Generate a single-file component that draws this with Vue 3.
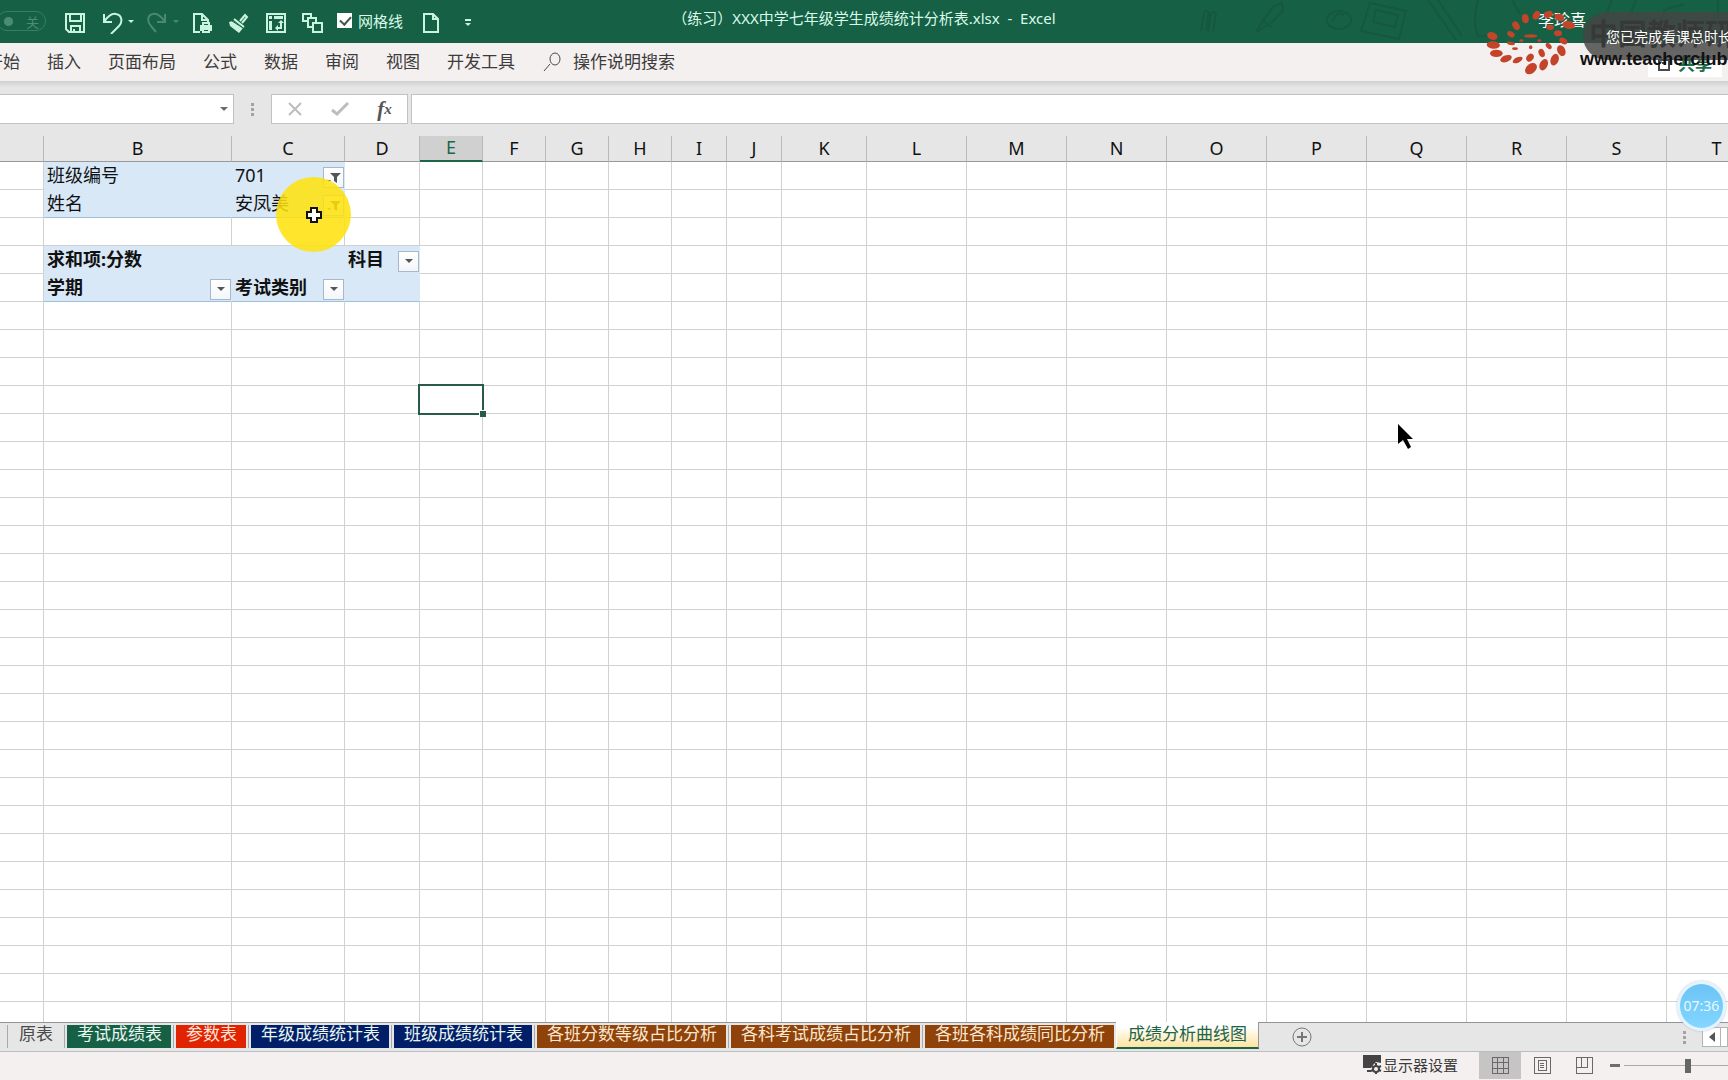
<script setup>
const menus = ['开始', '插入', '页面布局', '公式', '数据', '审阅', '视图', '开发工具']

const columns = [
  { name: '', width: 44 },
  { name: 'B', width: 188 },
  { name: 'C', width: 113 },
  { name: 'D', width: 75 },
  { name: 'E', width: 63 },
  { name: 'F', width: 63 },
  { name: 'G', width: 63 },
  { name: 'H', width: 63 },
  { name: 'I', width: 55 },
  { name: 'J', width: 55 },
  { name: 'K', width: 85 },
  ...'LMNOPQRST'.split('').map((name) => ({ name, width: 100 })),
]

const rowCount = 31
const active = 'E9'

const cells = {
  B1: { text: '班级编号', kind: 'pivot' },
  C1: { text: '701', kind: 'pivot', button: 'filter' },
  B2: { text: '姓名', kind: 'pivot last' },
  C2: { text: '安凤美', kind: 'pivot last', button: 'filter' },
  B4: { text: '求和项:分数', kind: 'pivot bold' },
  C4: { text: '', kind: 'pivot' },
  D4: { text: '科目', kind: 'pivot bold', button: 'drop' },
  B5: { text: '学期', kind: 'pivot bold last', button: 'drop' },
  C5: { text: '考试类别', kind: 'pivot bold last', button: 'drop' },
  D5: { text: '', kind: 'pivot last' },
}
const cellAt = (col, row) => cells[col + row] || {}

const sheets = [
  { name: '原表', tone: 'plain' },
  { name: '考试成绩表', tone: 'green' },
  { name: '参数表', tone: 'red' },
  { name: '年级成绩统计表', tone: 'navy' },
  { name: '班级成绩统计表', tone: 'navy' },
  { name: '各班分数等级占比分析', tone: 'brown' },
  { name: '各科考试成绩占比分析', tone: 'brown' },
  { name: '各班各科成绩同比分析', tone: 'brown' },
  { name: '成绩分析曲线图', tone: 'current' },
]

// cx, cy, rx, ry, rotation of every petal in the emblem
const petals = [
  [97, 108, 16, 11, 20], [100, 135, 20, 11, 5], [109, 160, 19, 11, 0],
  [138, 176, 18, 10, -20], [173, 180, 16, 8, -25], [213, 206, 20, 14, -40],
  [251, 194, 18, 12, -65], [284, 179, 18, 12, -70], [304, 152, 17, 12, 65],
  [310, 123, 13, 9, 30], [153, 103, 12, 8, 30], [168, 77, 14, 10, 60],
  [196, 56, 14, 10, 80], [229, 46, 14, 10, -60], [265, 43, 14, 10, -20],
  [298, 52, 15, 11, 20], [326, 75, 19, 12, 10], [153, 130, 12, 5, 10],
  [165, 146, 9, 4, 0], [210, 173, 13, 10, -50], [245, 159, 13, 9, 70],
  [266, 138, 11, 7, 50], [294, 100, 12, 9, 0], [270, 82, 12, 8, 0],
  [212, 142, 5, 6, 0], [212, 108, 20, 5, 0], [184, 122, 6, 4, 0], [238, 122, 6, 4, 0],
]
</script>

<template>
  <div class="app">
    <header class="titlebar">
      <svg class="doodles" viewBox="0 0 548 43" width="548" height="43" aria-hidden="true">
        <path d="M21 31l3-18q3-4 5 0l-3 17M28 32l3-18q3-4 5 0l-3 17M76 32l6-10 12-16 8-3 1 8-12 12zM84 21l7 6M148 24a11 8 0 1 1 22-8a11 8 0 1 1-22 8M152 22q5-12 12-7M190 3l36 8-7 28-38-8zM196 10l22 5-3 12-22-5zM248 0l28 40M258 0l24 36M298 0q-6 22 0 36h10M332 0l8 14M432 0l-12 30M456 0l-14 36M480 40l4-30 20-6M538 0v30" />
      </svg>
      <div class="quick">
        <button class="toggle" aria-label="自动保存"><i></i><span>关</span></button>
        <button class="ico save" aria-label="保存">
          <svg width="20" height="20" viewBox="0 0 20 20"><path d="M1 1h18v18H4l-3-3zM5 1v7h11V1M6 19v-6h9v6M9 19v-3" /></svg>
        </button>
        <button class="ico undo" aria-label="撤消">
          <svg width="34" height="22" viewBox="0 0 34 22"><path d="M2 2v8h8M2 10C6 4 10 1 14 2c6 1 7 8 3 12l-8 8" /><path class="solid" d="M26 8h6l-3 3z" /></svg>
        </button>
        <button class="ico redo" aria-label="恢复">
          <svg width="34" height="22" viewBox="0 0 34 22"><path d="M18 2v8h-8M18 10C14 4 10 1 6 2c-6 1-6 8-2 12l5 6" /><path class="solid" d="M26 8h6l-3 3z" /></svg>
        </button>
        <button class="ico print" aria-label="打印预览">
          <svg width="20" height="20" viewBox="0 0 20 20"><path d="M7 19H1V1h8l6 6v2M9 1v6h6M10 13v-3h6v3" /><path class="solid" d="M7 12h12v6h-2v-3H9v3H7z" /><path d="M10 16h6v3h-6z" /></svg>
        </button>
        <button class="ico brush" aria-label="格式刷">
          <svg width="21" height="21" viewBox="0 0 21 21"><path d="M12 8l5-6 2 2-5 6M6 6l10 8" /><path class="solid" d="M1 9l4-1 10 7-4 5zM1 9l1 4 9 7z" /><path class="cut" d="M4 8l11 7" /></svg>
        </button>
        <button class="ico pivot" aria-label="数据透视表">
          <svg width="20" height="20" viewBox="0 0 20 20"><path d="M1 1h18v18H1z" /><path class="solid" d="M3 3h3v3H3zM8 3h9v3H8zM3 8h3v9H3zM12 10l3-3 3 3zM12 12l-3 3 3 3z" /><path d="M15 9v6h-4" /></svg>
        </button>
        <button class="ico copies" aria-label="选择窗格">
          <svg width="21" height="20" viewBox="0 0 21 20"><path d="M5 8H1V1h8v3M10 14H6V5h8v4M11 10h9v9h-9z" /></svg>
        </button>
        <label class="gridtick"><input type="checkbox" checked /><span>网格线</span></label>
        <button class="ico page" aria-label="新建">
          <svg width="17" height="20" viewBox="0 0 17 20"><path d="M1 1h9l5 5v13H1zM10 1v5h5" /></svg>
        </button>
        <button class="ico more" aria-label="自定义快速访问工具栏">
          <svg width="8" height="8" viewBox="0 0 8 8"><path d="M1 1h6" /><path class="solid" d="M1 4h6l-3 3z" /></svg>
        </button>
      </div>
      <h1>（练习）XXX中学七年级学生成绩统计分析表.xlsx&nbsp; -&nbsp; Excel</h1>
      <div class="account"><span>李珍喜</span></div>
    </header>

    <div class="ribbon">
      <nav>
        <a v-for="m in menus" :key="m" href="#">{{ m }}</a>
      </nav>
      <button class="tellme">
        <svg width="20" height="20" viewBox="0 0 20 20"><path d="M7 12L1 19M12 1a5 6 0 1 1 0 12a5 6 0 1 1 0-12" /></svg>
        <span>操作说明搜索</span>
      </button>
      <button class="share">
        <svg width="12" height="14" viewBox="0 0 12 14"><path d="M1 3h10v10H1zM4 6h4" /></svg>
        <span>共享</span>
      </button>
    </div>

    <div class="formula">
      <div class="namebox">
        <input type="text" aria-label="名称框" />
        <button aria-label="展开名称框"><svg width="8" height="5" viewBox="0 0 8 5"><path d="M0 0h8L4 4z" /></svg></button>
      </div>
      <span class="grip"><i></i><i></i><i></i></span>
      <div class="fxbox">
        <button aria-label="取消"><svg width="16" height="14" viewBox="0 0 16 14"><path d="M2 1l12 12M14 1L2 13" /></svg></button>
        <button aria-label="输入"><svg width="18" height="14" viewBox="0 0 18 14"><path class="thick" d="M1 8l5 4L17 1" /></svg></button>
        <button class="fx" aria-label="插入函数"><span>f</span><small>x</small></button>
      </div>
      <input class="expr" type="text" aria-label="编辑栏" />
    </div>

    <main class="sheet">
      <table>
        <colgroup>
          <col v-for="c in columns" :key="c.name" :style="{ width: c.width + 'px' }" />
        </colgroup>
        <thead>
          <tr>
            <th v-for="c in columns" :key="c.name" :class="{ on: c.name === 'E' }">{{ c.name }}</th>
          </tr>
        </thead>
        <tbody>
          <tr v-for="r in rowCount" :key="r">
            <td v-for="c in columns" :key="c.name" :class="cellAt(c.name, r).kind">
              <div v-if="cellAt(c.name, r).kind" class="cell">
                <span>{{ cellAt(c.name, r).text }}</span>
                <button v-if="cellAt(c.name, r).button" :aria-label="'筛选 ' + cellAt(c.name, r).text">
                  <svg v-if="cellAt(c.name, r).button === 'filter'" width="14" height="12" viewBox="0 0 14 12"><path d="M3 1h11l-4 4v6l-3-2V5zM0 8h4l-2 2z" /></svg>
                  <svg v-else width="8" height="5" viewBox="0 0 8 5"><path d="M0 0h8L4 4z" /></svg>
                </button>
              </div>
              <div v-if="c.name + r === active" class="selection"><i></i></div>
            </td>
          </tr>
        </tbody>
      </table>
    </main>

    <div class="tabs">
      <ul>
        <li v-for="s in sheets" :key="s.name" :class="s.tone"><button>{{ s.name }}</button></li>
      </ul>
      <button class="add" aria-label="新工作表">
        <svg width="22" height="22" viewBox="0 0 22 22"><circle cx="11" cy="11" r="9" /><path d="M11 6v10M6 11h10" /></svg>
      </button>
      <div class="hscroll">
        <span class="grip"><i></i><i></i><i></i></span>
        <button aria-label="向左滚动"><svg width="6" height="10" viewBox="0 0 6 10"><path d="M6 0v10L0 5z" /></svg></button>
        <span class="bar"></span>
      </div>
    </div>

    <footer class="status">
      <button class="display">
        <svg width="20" height="19" viewBox="0 0 20 19">
          <path class="solid" d="M1 0h18v8l-5-1-5 5v1H1zM5 15h4v2H5z" />
          <path class="gear" d="M14 8v11M9 11l10 5M19 11L9 16" /><circle cx="14" cy="14" r="3" />
        </svg>
        <span>显示器设置</span>
      </button>
      <button class="view on" aria-label="普通"><svg width="18" height="18" viewBox="0 0 18 18"><path d="M1 1h16v16H1zM1 6h16M1 12h16M6 1v16M12 1v16" /></svg></button>
      <button class="view" aria-label="页面布局"><svg width="18" height="18" viewBox="0 0 18 18"><path d="M1 1h16v16H1zM5 4h8v10H5zM7 7h4M7 9h4M7 11h4" /></svg></button>
      <button class="view" aria-label="分页预览"><svg width="18" height="18" viewBox="0 0 18 18"><path d="M1 1h16v16H1zM1 11h11V1M6 1v10" /></svg></button>
      <button class="minus" aria-label="缩小"></button>
      <input class="zoom" type="range" aria-label="缩放" value="50" />
    </footer>

    <div class="spot">
      <svg width="16" height="16" viewBox="0 0 16 16"><path d="M5 1h6v4h4v6h-4v4H5v-4H1V5h4z" /></svg>
    </div>
    <svg class="pointer" width="16" height="26" viewBox="0 0 16 26"><path d="M0 0l15 15H9l4 8-3 2-5-9-5 4z" /></svg>

    <div class="clock">07:36</div>

    <div class="watermark">
      <svg class="emblem" viewBox="0 0 804 270" width="268" height="90" aria-hidden="true">
        <ellipse v-for="(p, i) in petals" :key="i" :cx="p[0]" :cy="p[1]" :rx="p[2]" :ry="p[3]" :transform="`rotate(${p[4]} ${p[0]} ${p[1]})`" />
      </svg>
      <span class="brand">中国教师研</span>
      <div class="notice">您已完成看课总时长</div>
      <span class="site">www.teacherclub</span>
    </div>
  </div>
</template>

<style>
html,
body,
#app {
  height: 100%;
}
body {
  margin: 0;
}
</style>

<style scoped>
.app {
  position: relative;
  display: flex;
  flex-direction: column;
  height: 100%;
  overflow: hidden;
  background: #e6e6e7;
  color: #111;
  font-family: 'Noto Sans', 'Noto Sans CJK SC', sans-serif;
}
* {
  box-sizing: border-box;
}
button {
  display: flex;
  align-items: center;
  justify-content: center;
  padding: 0;
  border: 0;
  background: none;
  color: inherit;
  font: inherit;
}
svg {
  display: block;
  flex: none;
}

/* title bar */
.titlebar {
  position: relative;
  display: grid;
  grid-template-columns: 1fr auto 1fr;
  flex: none;
  height: 43px;
  background: #166045;
  color: #d9fbea;
  font-size: 15px;
}
.doodles {
  position: absolute;
  top: 0;
  right: 0;
  fill: none;
  stroke: #15583f;
  stroke-width: 2;
}
.quick {
  display: flex;
  align-items: center;
  padding-top: 3px;
}
.ico svg {
  fill: none;
  stroke: #c9f5df;
  stroke-width: 2;
}
.ico .solid {
  fill: #c9f5df;
  stroke: none;
}
.ico .cut {
  stroke: #166045;
  stroke-width: 1;
}
.toggle {
  gap: 13px;
  width: 49px;
  height: 20px;
  margin-left: -3px;
  margin-bottom: 4px;
  border: 1px solid #35805f;
  border-radius: 10px;
  color: #4b8d70;
  font-size: 13px;
}
.toggle i {
  width: 9px;
  height: 9px;
  border-radius: 5px;
  background: #4b8d70;
}
.save {
  margin-left: 19px;
}
.undo {
  margin-left: 17px;
}
.redo {
  margin-left: 11px;
  opacity: 0.28;
}
.print {
  margin-left: 12px;
}
.brush {
  margin-left: 15px;
}
.pivot {
  margin-left: 17px;
}
.copies {
  margin-left: 16px;
}
.gridtick {
  display: flex;
  align-items: center;
  gap: 6px;
  margin-left: 14px;
  margin-bottom: 5px;
  line-height: 20px;
}
.gridtick input {
  appearance: none;
  width: 15px;
  height: 15px;
  margin: 0;
  background: #fff;
}
.gridtick input:checked::before {
  content: '';
  display: block;
  width: 9px;
  height: 5px;
  margin: 3px 0 0 3px;
  border: solid #45554d;
  border-width: 0 0 2px 2px;
  transform: rotate(-48deg);
}
.page {
  margin-left: 20px;
}
.more {
  margin-left: 24px;
}
h1 {
  margin: 0;
  font-size: 15px;
  font-weight: 400;
  line-height: 36px;
  white-space: pre;
}
.account {
  display: flex;
  justify-content: flex-end;
  padding-right: 142px;
  color: #fff;
  font-size: 16px;
  line-height: 41px;
}

/* ribbon */
.ribbon {
  display: flex;
  align-items: center;
  flex: none;
  height: 38px;
  background: #f4f0ef;
  color: #3d3b3b;
  font-size: 17px;
  line-height: 38px;
}
nav {
  display: flex;
  gap: 27px;
  margin-left: -14px;
}
nav a {
  color: inherit;
  text-decoration: none;
  white-space: nowrap;
}
.tellme {
  gap: 10px;
  margin-left: 28px;
}
.tellme svg,
.share svg {
  fill: none;
  stroke: #4a4848;
  stroke-width: 1;
}
.share {
  gap: 8px;
  width: 74px;
  height: 26px;
  margin: 4px 6px 0 auto;
  background: #fff;
  color: #1d6b4b;
  font-weight: 700;
}
.share svg {
  stroke-width: 2;
}

/* formula bar */
.formula {
  display: flex;
  flex: none;
  height: 55px;
  padding: 13px 0 12px;
  background: linear-gradient(#cfcfcf, #e6e6e7 6px);
}
.formula input {
  width: 100%;
  min-width: 0;
  padding: 0;
  border: 0;
  background: none;
  font-size: 17px;
}
.namebox {
  display: flex;
  width: 234px;
  border: 1px solid #bfc3c3;
  border-left: 0;
  background: #fff;
}
.namebox button {
  width: 20px;
}
.namebox svg {
  fill: #6b6b6b;
}
.grip {
  display: flex;
  flex-direction: column;
  align-items: center;
  justify-content: center;
  gap: 2px;
  width: 37px;
}
.grip i {
  width: 3px;
  height: 3px;
  background: #a3a3a3;
}
.fxbox {
  display: flex;
  width: 137px;
  border: 1px solid #bfc3c3;
  background: #fff;
}
.fxbox button {
  width: 45px;
}
.fxbox svg {
  fill: none;
  stroke: #bdbdbd;
  stroke-width: 2;
}
.fxbox .thick {
  stroke-width: 3;
}
.fx {
  color: #555;
  font-family: 'Liberation Serif', serif;
  font-size: 21px;
  font-style: italic;
  font-weight: 700;
  line-height: 24px;
}
.fx small {
  font-size: 15px;
}
.formula .expr {
  flex: 1;
  margin-left: 3px;
  border: 1px solid #bfc3c3;
  border-right: 0;
  background: #fff;
}

/* grid */
.sheet {
  flex: 1;
  min-height: 0;
  overflow: hidden;
  background: #fff;
}
table {
  width: 0;
  table-layout: fixed;
  border-collapse: separate;
  border-spacing: 0;
  font-size: 18px;
}
th {
  height: 26px;
  padding: 0 0 2px;
  border-right: 1px solid #b9b9ba;
  border-bottom: 1px solid #999;
  background: #e6e6e7;
  font-weight: 400;
  line-height: 22px;
}
th.on {
  border-bottom: 2px solid #1c6547;
  background: #d0d0d0;
  color: #1c6547;
}
td {
  position: relative;
  height: 28px;
  padding: 0;
  border-right: 1px solid #d0d1d1;
  border-bottom: 1px solid #d0d1d1;
  line-height: 26px;
  white-space: nowrap;
}
td.pivot {
  border-color: #d8e8f7;
  background: #d8e8f7;
}
td.last {
  border-bottom-color: #9dbfdc;
}
td.bold {
  font-weight: 700;
}
.cell {
  display: flex;
  justify-content: space-between;
  height: 27px;
  padding-left: 3px;
}
.cell button {
  width: 21px;
  height: 21px;
  margin-top: 5px;
  border: 1px solid #a9b7cb;
  background: linear-gradient(#fff, #f3f6fa);
}
.cell svg {
  fill: #555;
}
.selection {
  position: absolute;
  z-index: 1;
  inset: -2px;
  border: 2px solid #2a5b48;
}
.selection i {
  position: absolute;
  right: -4px;
  bottom: -4px;
  width: 7px;
  height: 7px;
  border: solid #fff;
  border-width: 1px 0 0 1px;
  background: #2a5b48;
}

/* sheet tabs */
.tabs {
  display: flex;
  flex: none;
  height: 30px;
  border-top: 1px solid #8f9496;
  border-bottom: 1px solid #b9bdc4;
  background: #e6e6e7;
  font-size: 17px;
}
.tabs ul {
  display: flex;
  margin: 0 0 0 7px;
  padding: 0;
  list-style: none;
}
.tabs li {
  margin-top: 2px;
  height: 23px;
  padding: 0 2px;
  border-left: 1px solid #a8a8ad;
}
.tabs li button {
  align-items: flex-start;
  height: 23px;
  padding: 0 9px 0 10px;
  color: #e9f6f0;
  line-height: 17px;
  white-space: nowrap;
}
.tabs .plain button {
  padding: 0 9px;
  color: #4a4a4a;
}
.tabs .green button {
  background: #166045;
}
.tabs .red button {
  background: #e02300;
  color: #ffe3d8;
}
.tabs .navy button {
  background: #001f68;
}
.tabs .brown button {
  background: #8f420a;
  color: #fbe7cf;
}
.tabs .current {
  height: 27px;
  margin-top: -1px;
  padding: 0;
  border-left: 0;
}
.tabs .current button {
  height: 27px;
  padding: 3px 11px 0;
  border: 1px solid #fff;
  border-top: 0;
  border-right-color: #999;
  border-bottom: 2px solid #1c6547;
  background: linear-gradient(#fff 5px, #ffe3a0);
  color: #1c6547;
}
.add {
  margin-left: 32px;
}
.add svg {
  fill: none;
  stroke: #767676;
  stroke-width: 1;
}
.add path {
  stroke-width: 2;
}
.hscroll {
  display: flex;
  align-items: center;
  margin-left: auto;
}
.hscroll .grip {
  width: 36px;
}
.hscroll button,
.bar {
  width: 19px;
  height: 20px;
  border: 1px solid #b4b4b4;
  background: #fff;
}
.hscroll svg {
  fill: #555;
}
.bar {
  width: 7px;
  border-left: 0;
}

/* status bar */
.status {
  display: flex;
  flex: none;
  height: 28px;
  padding-bottom: 1px;
  background: #f4f0f0;
  color: #3d3b3b;
  font-size: 15px;
}
.display {
  gap: 1px;
  margin-left: auto;
  margin-right: 21px;
  padding-bottom: 2px;
}
.display svg {
  fill: #f4f0f0;
  stroke: #444;
  stroke-width: 2;
}
.display .solid {
  fill: #444;
  stroke: none;
}
.view {
  width: 42px;
  padding-bottom: 1px;
}
.view.on {
  background: #c6c4c4;
}
.view svg {
  fill: none;
  stroke: #6a6868;
  stroke-width: 1;
  shape-rendering: crispEdges;
}
.minus::before {
  content: '';
  width: 10px;
  height: 3px;
  background: #6f6d6d;
}
.minus {
  margin-left: 5px;
}
.zoom {
  appearance: none;
  width: 127px;
  height: 27px;
  margin: 0 -23px 0 4px;
  background: linear-gradient(#aaa, #aaa) center / 100% 1px no-repeat;
}
.zoom::-webkit-slider-thumb {
  appearance: none;
  width: 6px;
  height: 14px;
  background: #666;
}

/* things floating over the window */
.spot {
  position: absolute;
  top: 177px;
  left: 276px;
  display: flex;
  align-items: center;
  justify-content: center;
  width: 75px;
  height: 75px;
  border-radius: 50%;
  background: rgba(255, 226, 10, 0.86);
}
.spot svg {
  fill: #fff;
  stroke: #111;
  stroke-width: 2;
}
.pointer {
  position: absolute;
  top: 424px;
  left: 1398px;
}
.clock {
  position: absolute;
  right: 2px;
  bottom: 49px;
  width: 49px;
  height: 50px;
  border: 3px solid #e3f4fd;
  border-radius: 50%;
  background: linear-gradient(#6cc4f5, #82d6ff);
  box-shadow: 0 0 2px #aac;
  color: #e8f8ff;
  font-size: 14px;
  line-height: 44px;
  text-align: center;
}
.watermark {
  position: absolute;
  top: 0;
  right: 0;
  width: 268px;
  height: 90px;
  overflow: hidden;
  white-space: nowrap;
}
.emblem {
  fill: #c4442a;
}
.brand,
.site,
.notice {
  position: absolute;
}
.brand {
  top: 14px;
  left: 129px;
  color: #000;
  font-size: 29px;
  font-weight: 700;
  line-height: 40px;
}
.site {
  top: 48px;
  left: 120px;
  color: #111;
  font: 700 18px/22px 'Liberation Sans', sans-serif;
}
.notice {
  top: 12px;
  left: 123px;
  width: 200px;
  height: 48px;
  padding-left: 23px;
  border-radius: 24px;
  background: rgba(68, 68, 68, 0.82);
  color: #fff;
  font-size: 14px;
  line-height: 49px;
}
</style>
